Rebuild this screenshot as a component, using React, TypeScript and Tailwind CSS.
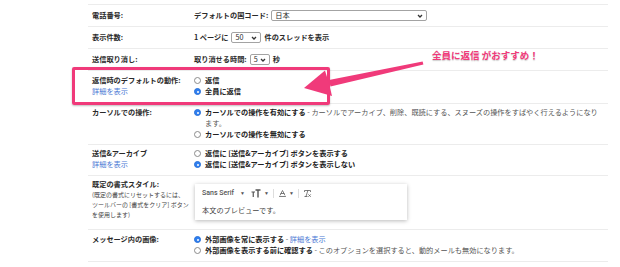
import React from 'react';
import { Baseline, RemoveFormatting } from 'lucide-react';

// small radio button like the Gmail settings page
const Radio = ({ on }: { on?: boolean }) => (
  <span
    className={
      on
        ? 'flex items-center justify-center w-[7px] h-[7px] rounded-full shrink-0 bg-[#2f7ff0] border border-[#2a72d8]'
        : 'block w-[7px] h-[7px] rounded-full shrink-0 bg-white border border-[#8c8c8c]'
    }
  >
    {on && <span className="block w-[2px] h-[2px] rounded-full bg-white" />}
  </span>
);

const Chevron = () => (
  <svg width="6" height="4" viewBox="0 0 6 4" className="shrink-0">
    <path d="M1 1l2 2 2-2" fill="none" stroke="#333" strokeWidth="1.3" />
  </svg>
);

const Select = ({ value, className }: { value: string; className: string }) => (
  <span
    className={`inline-flex items-center justify-between h-[11px] border border-[#a3a3a3] rounded-[2px] pl-[3px] pr-[3px] bg-white leading-[9px] font-normal ${className}`}
  >
    <span>{value}</span>
    <Chevron />
  </span>
);

const Option = ({ on, children }: { on?: boolean; children: React.ReactNode }) => (
  <div className="flex items-center gap-[4px] h-[11px] whitespace-nowrap">
    <Radio on={on} />
    <span>{children}</span>
  </div>
);

const Link = ({ children }: { children: React.ReactNode }) => (
  <span className="text-[#4a78d4] font-normal">{children}</span>
);

const Row = ({
  label,
  link,
  className,
  children,
}: {
  label: React.ReactNode;
  link?: boolean;
  className: string;
  children: React.ReactNode;
}) => (
  <div className={`flex border-b border-[#ececec] ${className}`}>
    <div className="w-[106px] shrink-0 pl-[4px] font-semibold text-[#2a2a2a]">
      <div className="h-[11px] whitespace-nowrap">{label}</div>
      {link && (
        <div className="h-[11px]">
          <Link>詳細を表示</Link>
        </div>
      )}
    </div>
    <div className="flex-1 min-w-0">{children}</div>
  </div>
);

const Toolbar = () => (
  <div className="ml-[1px] mt-[5px] w-[212px] h-[36px] bg-white shadow-[0_1px_4px_rgba(0,0,0,0.28)] pl-[7px] pt-[3px]">
    <div className="flex items-center h-[12px] text-[#555] font-['Roboto','Noto_Sans',sans-serif] font-medium">
      <span className="text-[7px]">Sans Serif</span>
      <span className="ml-[6px] text-[5px]">▼</span>
      <svg width="10" height="9" viewBox="0 0 10 9" className="ml-[6px]">
        <path d="M0.5 3h3.5M2.25 3v5" stroke="#555" strokeWidth="1.2" fill="none" />
        <path d="M4.5 1h5M7 1v7.5" stroke="#555" strokeWidth="1.4" fill="none" />
      </svg>
      <span className="ml-[3px] text-[5px]">▼</span>
      <span className="ml-[4px] w-px h-[9px] bg-[#ddd]" />
      <Baseline className="ml-[4px] w-[9px] h-[9px]" strokeWidth={2} color="#555" />
      <span className="ml-[2px] text-[5px]">▼</span>
      <span className="ml-[4px] w-px h-[9px] bg-[#ddd]" />
      <RemoveFormatting className="ml-[4px] w-[9px] h-[9px]" strokeWidth={2} color="#555" />
    </div>
    <div className="mt-[6px] h-[11px] text-[#444]">本文のプレビューです。</div>
  </div>
);

export default function App() {
  return (
    <div className="relative w-[620px] h-[267px] overflow-hidden bg-white text-[7.2px] leading-[11px] text-[#222] font-['Noto_Sans_CJK_JP','Noto_Sans',sans-serif]">
      <div className="ml-[88px] w-[520px] mt-[4px] border-t border-[#ececec]">
        <Row label="電話番号:" className="h-[22px] items-center">
          <div className="flex items-center gap-[3px] font-semibold text-[#2a2a2a]">
            <span>デフォルトの国コード:</span>
            <Select value="日本" className="w-[156px]" />
          </div>
        </Row>
        <Row label="表示件数:" className="h-[22px] items-center">
          <div className="flex items-center gap-[3px] font-semibold text-[#2a2a2a]">
            <span>1 ページに</span>
            <Select value="50" className="w-[30px]" />
            <span>件のスレッドを表示</span>
          </div>
        </Row>
        <Row label="送信取り消し:" className="h-[22px] items-center">
          <div className="flex items-center gap-[3px] font-semibold text-[#2a2a2a]">
            <span>取り消せる時間:</span>
            <Select value="5" className="w-[20px]" />
            <span>秒</span>
          </div>
        </Row>
        <Row label="返信時のデフォルトの動作:" link className="h-[33px] pt-[4px]">
          <div className="font-bold">
            <Option>返信</Option>
            <Option on>全員に返信</Option>
          </div>
        </Row>
        <Row label="カーソルでの操作:" className="h-[41px] pt-[3px]">
          <div className="font-bold">
            <Option on>
              カーソルでの操作を有効にする
              <span className="font-normal text-[#555]"> - カーソルでアーカイブ、削除、既読にする、スヌーズの操作をすばやく行えるようになり</span>
            </Option>
            <div className="h-[11px] pl-[11px] font-normal text-[#555]">ます。</div>
            <Option>カーソルでの操作を無効にする</Option>
          </div>
        </Row>
        <Row label="送信&アーカイブ" link className="h-[31px] pt-[3px]">
          <div className="font-bold">
            <Option>返信に [送信&アーカイブ] ボタンを表示する</Option>
            <Option on>返信に [送信&アーカイブ] ボタンを表示しない</Option>
          </div>
        </Row>
        <div className="flex h-[54px] pt-[3px] border-b border-[#ececec]">
          <div className="w-[106px] shrink-0 pl-[4px]">
            <div className="h-[11px] font-semibold text-[#2a2a2a]">既定の書式スタイル:</div>
            <div className="text-[6px] leading-[10px] text-[#444] whitespace-nowrap">
              <div>(既定の書式にリセットするには、</div>
              <div>ツールバーの [書式をクリア] ボタン</div>
              <div>を使用します)</div>
            </div>
          </div>
          <div className="flex-1">
            <Toolbar />
          </div>
        </div>
        <Row label="メッセージ内の画像:" className="h-[32px] pt-[4px]">
          <div className="font-bold">
            <Option on>
              外部画像を常に表示する<span className="font-normal text-[#555]"> - </span>
              <Link>詳細を表示</Link>
            </Option>
            <Option>
              外部画像を表示する前に確認する
              <span className="font-normal text-[#555]"> - このオプションを選択すると、動的メールも無効になります。</span>
            </Option>
          </div>
        </Row>
      </div>

      {/* annotation overlay */}
      <div className="absolute left-[72px] top-[67px] w-[258px] h-[38px] border-[3px] border-[#f03a7a] rounded-[2px] shadow-[0_1px_2px_rgba(0,0,0,0.25)]" />
      <svg className="absolute left-0 top-0 pointer-events-none" width="620" height="267" viewBox="0 0 620 267">
        <polygon points="423.4,64.6 422.6,61.4 329,80 330.5,86.5" fill="#f03a7a" />
        <polygon points="304,88 325,70.5 329,83.5 332,96" fill="#f03a7a" />
      </svg>
      <div className="absolute left-[432px] top-[49px] text-[9.5px] leading-[12px] font-bold text-[#f03a7a] whitespace-nowrap [text-shadow:0_0_2px_#fff,0_1px_1px_rgba(0,0,0,0.25)]">
        全員に返信 がおすすめ！
      </div>
    </div>
  );
}
